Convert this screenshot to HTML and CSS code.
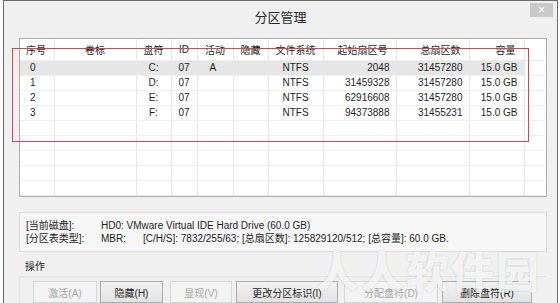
FILE: index.html
```html
<!DOCTYPE html>
<html>
<head>
	<meta charset="UTF-8">
	<title>分区管理</title>
	<link rel="stylesheet" href="styles.css">
</head>
<body>
	<div class="window">
		<div class="titlebar">
			<span class="title">分区管理</span>
			<span class="close">×</span>
		</div>
		<div class="main">
			<div class="grid-box">
				<table class="parts">
					<colgroup>
						<col style="width:34px"><col style="width:82px"><col style="width:35px"><col style="width:26px">
						<col style="width:36px"><col style="width:35px"><col style="width:55px"><col style="width:73px">
						<col style="width:73px"><col style="width:55px"><col>
					</colgroup>
					<thead>
						<tr>
							<th class="c-no">序号</th><th>卷标</th><th>盘符</th><th>ID</th><th>活动</th><th>隐藏</th>
							<th>文件系统</th><th class="num">起始扇区号</th><th class="num">总扇区数</th><th class="num">容量</th><th></th>
						</tr>
					</thead>
					<tbody>
						<tr class="sel">
							<td class="c-no">0</td><td></td><td class="mid">C:</td><td class="mid">07</td><td class="act">A</td><td></td>
							<td class="mid">NTFS</td><td class="num">2048</td><td class="num">31457280</td><td class="num">15.0 GB</td><td class="fill"></td>
						</tr>
						<tr>
							<td class="c-no">1</td><td></td><td class="mid">D:</td><td class="mid">07</td><td class="act"></td><td></td>
							<td class="mid">NTFS</td><td class="num">31459328</td><td class="num">31457280</td><td class="num">15.0 GB</td><td class="fill"></td>
						</tr>
						<tr>
							<td class="c-no">2</td><td></td><td class="mid">E:</td><td class="mid">07</td><td class="act"></td><td></td>
							<td class="mid">NTFS</td><td class="num">62916608</td><td class="num">31457280</td><td class="num">15.0 GB</td><td class="fill"></td>
						</tr>
						<tr>
							<td class="c-no">3</td><td></td><td class="mid">F:</td><td class="mid">07</td><td class="act"></td><td></td>
							<td class="mid">NTFS</td><td class="num">94373888</td><td class="num">31455231</td><td class="num">15.0 GB</td><td class="fill"></td>
						</tr>
						<tr><td></td><td></td><td></td><td></td><td></td><td></td><td></td><td></td><td></td><td></td><td class="fill"></td></tr>
						<tr><td></td><td></td><td></td><td></td><td></td><td></td><td></td><td></td><td></td><td></td><td class="fill"></td></tr>
						<tr><td></td><td></td><td></td><td></td><td></td><td></td><td></td><td></td><td></td><td></td><td class="fill"></td></tr>
						<tr><td></td><td></td><td></td><td></td><td></td><td></td><td></td><td></td><td></td><td></td><td class="fill"></td></tr>
						<tr><td></td><td></td><td></td><td></td><td></td><td></td><td></td><td></td><td></td><td></td><td class="fill"></td></tr>
					</tbody>
				</table>
			</div>

			<div class="info">
				<div class="info-row"><span class="info-key">[当前磁盘]:</span><span>HD0: VMware Virtual IDE Hard Drive (60.0 GB)</span></div>
				<div class="info-row"><span class="info-key">[分区表类型]:</span><span class="mbr">MBR;</span><span>[C/H/S]: 7832/255/63; [总扇区数]: 125829120/512; [总容量]: 60.0 GB.</span></div>
			</div>

			<div class="ops-label">操作</div>
			<div class="ops">
				<button class="btn off w-a">激活(A)</button>
				<button class="btn w-h">隐藏(H)</button>
				<button class="btn off w-v">显现(V)</button>
				<button class="btn w-i">更改分区标识(I)</button>
				<button class="btn off w-d">分配盘符(D)</button>
				<button class="btn w-r">删除盘符(R)</button>
			</div>
		</div>
	</div>

	<!-- 标注框和水印 -->
	<div class="mark"></div>
	<div class="watermark">人人软件园</div>
</body>
</html>
```

FILE: styles.css
```css
* {
	margin: 0;
	padding: 0;
	box-sizing: border-box;
}

body {
	width: 560px;
	height: 303px;
	overflow: hidden;
	background: #fff;
	font-family: "Liberation Sans", "Noto Sans CJK SC", sans-serif;
	font-size: 10px;
	color: #1e1e1e;
}

.window {
	margin-left: 3px;
	width: 555px;
	height: 303px;
	border: 1px solid #6a6a6a;
	border-bottom: none;
	background: #f0f0f0;
}

.titlebar {
	height: 30px;
	display: flex;
	align-items: center;
	justify-content: center;
	position: relative;
}

.title {
	font-size: 13px;
	color: #2a2a2a;
	padding-top: 1px;
}

.close {
	position: absolute;
	top: 2px;
	right: 4px;
	width: 23px;
	height: 14px;
	background: #c9c9c9;
	color: #fff;
	font-size: 12px;
	line-height: 14px;
	text-align: center;
}

.main {
	padding: 7px 10px 0 15px;
}

.grid-box {
	height: 159px;
	border: 1px solid #ababab;
	background: #fff;
	overflow: hidden;
}

.parts {
	width: 525px;
	table-layout: fixed;
	border-collapse: collapse;
}

.parts th {
	height: 21px;
	font-weight: normal;
	border-right: 1px solid #e6e6e6;
	border-bottom: 1px solid #ececec;
	text-align: center;
	white-space: nowrap;
	padding-top: 1px;
}

.parts td {
	height: 15px;
	border-right: 1px solid #e6e6e6;
	border-bottom: 1px solid #efefef;
	white-space: nowrap;
	line-height: 13px;
}

.parts th:last-child,
.parts td:last-child {
	border-right: none;
}

.parts th.c-no {
	text-align: left;
	padding-left: 6px;
}

.parts td.c-no {
	padding-left: 10px;
}

.parts th.num {
	text-align: right;
	padding-right: 8px;
}

.parts td.num {
	text-align: right;
	padding-right: 6px;
}

.parts td.mid {
	text-align: center;
}

.parts td.act {
	padding-left: 12px;
}

.parts tr.sel td {
	background: #e6e6e6;
}

.parts tr.sel td.fill {
	background: #fff;
}

.info {
	margin-top: 15px;
	height: 40px;
	border: 1px solid #dcdcdc;
	background: #f6f6f6;
	padding: 6px 0 0 6px;
}

.info-row {
	display: flex;
	line-height: 13px;
	white-space: nowrap;
}

.info-key {
	width: 75px;
}

.mbr {
	width: 42px;
}

.ops-label {
	margin-top: 9px;
	padding-left: 6px;
	line-height: 12px;
}

.ops {
	margin-top: 3px;
	height: 40px;
	border-top: 1px solid #e2e2e2;
	border-left: 1px solid #e2e2e2;
	padding: 4px 0 0 13px;
	display: flex;
}

.btn {
	height: 22px;
	border: 1px solid #acacac;
	background: linear-gradient(#f2f2f2, #e3e3e3);
	font-family: "Liberation Sans", "Noto Sans CJK SC", sans-serif;
	font-size: 10px;
	color: #1e1e1e;
	flex: none;
}

.btn.off {
	border-color: #d6d6d6;
	background: #f3f3f3;
	color: #a6a6a6;
}

.w-a { width: 64px; }
.w-h { width: 63px; margin-left: 3px; }
.w-v { width: 62px; margin-left: 7px; }
.w-i { width: 102px; margin-left: 4px; }
.w-d { width: 94px; margin-left: 6px; }
.w-r { width: 90px; margin-left: 4px; }

.mark {
	position: absolute;
	left: 12px;
	top: 48px;
	width: 517px;
	height: 94px;
	border: 1px solid #cf4a4a;
}

.watermark {
	position: absolute;
	left: 316px;
	top: 244px;
	font-family: "Noto Sans CJK SC", sans-serif;
	font-weight: 900;
	font-size: 43px;
	line-height: 50px;
	letter-spacing: 2px;
	color: rgba(255, 255, 255, 0.8);
	text-shadow: 0 0 2px rgba(0, 0, 0, 0.18);
}
```
